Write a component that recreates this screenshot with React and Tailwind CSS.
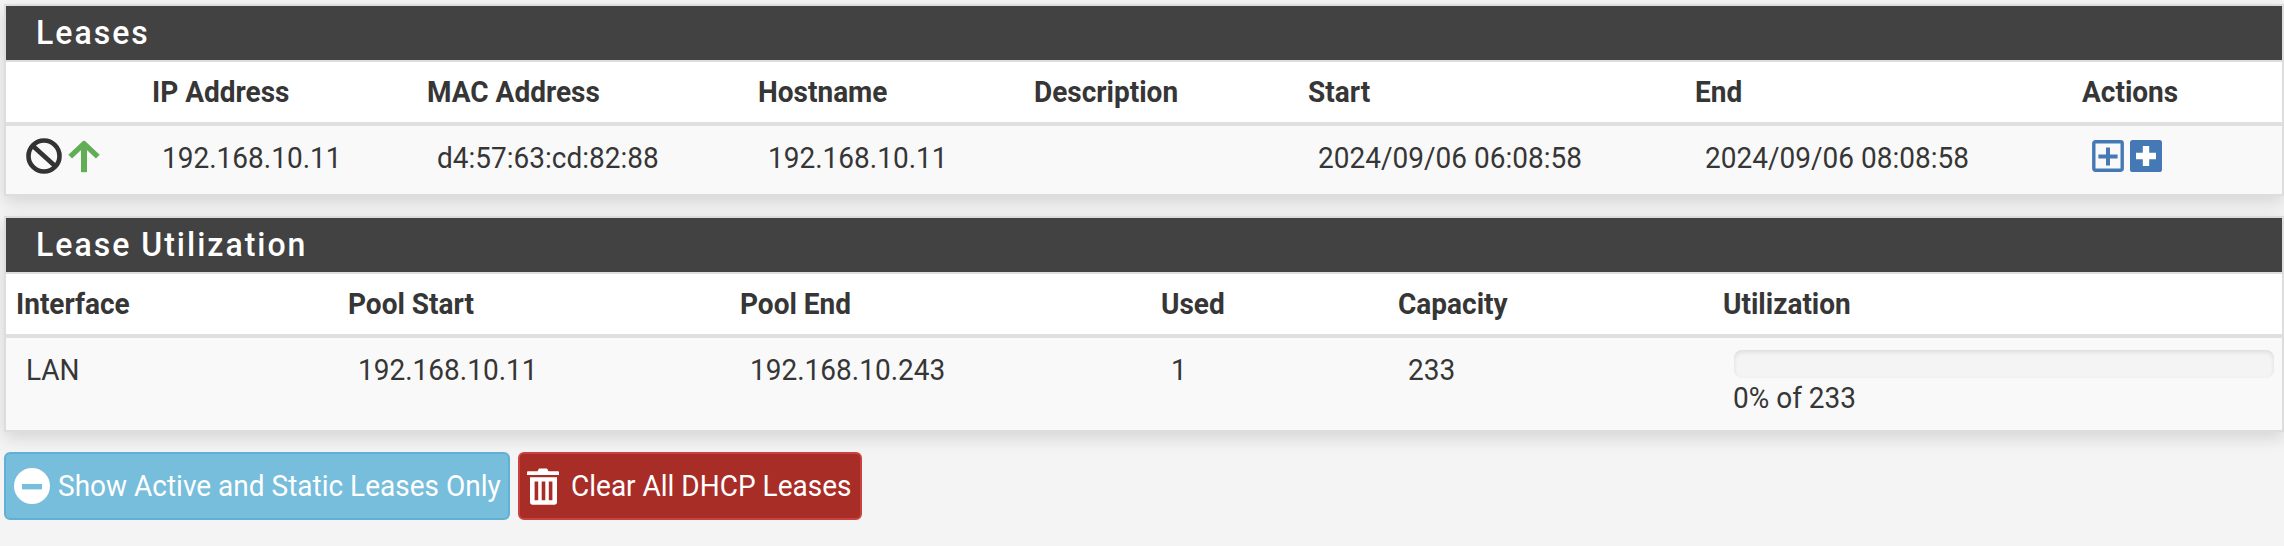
import React from "react";

const leaseCols = "grid grid-cols-[136px_275px_331px_276px_274px_387px_387px_210px]";
const poolCols = "grid grid-cols-[332px_392px_421px_237px_325px_569px]";

function Text({ children }) {
  return <span className="inline-block origin-[50%_73%] scale-y-[1.06] whitespace-nowrap">{children}</span>;
}

function Panel({ title, children }) {
  return (
    <section className="border-2 border-[#dddddd] bg-white shadow-[0_6px_16px_rgba(0,0,0,0.13)]">
      <h2 className="flex h-[54px] items-center bg-[#424242] pl-[30px] text-[32px] leading-[54px] font-medium tracking-[2px] text-white">
        <span className="inline-block origin-[50%_70%] scale-y-[1.04]">{title}</span>
      </h2>
      <div className="border-t-2 border-[#dddddd]">{children}</div>
    </section>
  );
}

function HeadRow({ cols, labels }) {
  return (
    <div className={`${cols} h-16 border-b-4 border-[#dfdfdf] pt-[11px] font-bold`}>
      {labels.map((l, i) => (
        <div key={i} className="pl-[10px] leading-10"><Text>{l}</Text></div>
      ))}
    </div>
  );
}

function Cell({ children }) {
  return <div className="pt-0.5 pl-5 leading-10"><Text>{children}</Text></div>;
}

function BanIcon() {
  return (
    <svg className="size-9" viewBox="0 0 36 36" fill="none" stroke="#333" strokeWidth="4.6">
      <circle cx="18" cy="18" r="15.5" />
      <path d="M7.5 8.5 28.5 27.5" />
    </svg>
  );
}

function UpIcon() {
  return (
    <svg className="h-9 w-8" viewBox="0 0 32 36" fill="none" stroke="#62ae57">
      <path d="M2.200 18.600 16 5.600 29.800 18.600" strokeWidth="5.4" strokeLinejoin="round" />
      <path d="M16 6v28.200" strokeWidth="6" />
    </svg>
  );
}

function PlusOutlineIcon() {
  return (
    <svg className="size-8" viewBox="0 0 32 32" fill="none" stroke="#4579b5">
      <rect x="1.8" y="1.8" width="28.4" height="28.4" rx="1.6" strokeWidth="3.4" />
      <path d="M6.400 16.500h19.200M16 7.600v18" strokeWidth="4" />
    </svg>
  );
}

function PlusSolidIcon() {
  return (
    <svg className="size-8" viewBox="0 0 32 32">
      <rect width="32" height="32" rx="2.6" fill="#4579b5" />
      <path d="M6 16h20M16 6v20" stroke="#fff" strokeWidth="6.4" />
    </svg>
  );
}

function MinusCircleIcon() {
  return (
    <svg className="size-9" viewBox="0 0 36 36">
      <circle cx="18" cy="18" r="18" fill="#fff" />
      <rect x="8" y="16" width="20" height="5.4" fill="#77bddc" />
    </svg>
  );
}

function TrashIcon() {
  return (
    <svg className="h-[38px] w-8" viewBox="0 0 32 38" fill="#fff">
      <path d="M10.500 3.200 12 .6h8l1.500 2.600H31q1 0 1 1v2.900H0V4.200q0-1 1-1z" />
      <path fillRule="evenodd" d="M3 9.300h27V34q0 2.700-2.700 2.700H5.700Q3 36.700 3 34zM7.600 13.600v18.600h3.600V13.600zM14.700 13.600v18.600h3.600V13.600zM21.800 13.600v18.600h3.600V13.600z" />
    </svg>
  );
}

export default function App() {
  return (
    <div className="h-[546px] overflow-hidden bg-[#f4f4f4] pt-1 pl-1 font-['Roboto',sans-serif] text-[28px] text-[#363636]">
      <div className="flex flex-col gap-5">
        <Panel title="Leases">
          <HeadRow cols={leaseCols} labels={["", "IP Address", "MAC Address", "Hostname", "Description", "Start", "End", "Actions"]} />
          <div className={`${leaseCols} h-[68px] bg-[#f9f9f9] pt-[11px]`}>
            <div className="flex items-start gap-1.5 pt-px pl-5"><BanIcon /><UpIcon /></div>
            <Cell>192.168.10.11</Cell>
            <Cell>d4:57:63:cd:82:88</Cell>
            <Cell>192.168.10.11</Cell>
            <Cell />
            <Cell>2024/09/06 06:08:58</Cell>
            <Cell>2024/09/06 08:08:58</Cell>
            <div className="flex gap-1.5 pt-[3px] pl-5"><PlusOutlineIcon /><PlusSolidIcon /></div>
          </div>
        </Panel>

        <Panel title="Lease Utilization">
          <HeadRow cols={poolCols} labels={["Interface", "Pool Start", "Pool End", "Used", "Capacity", "Utilization"]} />
          <div className={`${poolCols} h-[92px] bg-[#f9f9f9] pt-[11px]`}>
            <Cell>LAN</Cell>
            <Cell>192.168.10.11</Cell>
            <Cell>192.168.10.243</Cell>
            <Cell>1</Cell>
            <Cell>233</Cell>
            <div className="pt-px pr-2 pl-[21px]">
              <div className="h-7 rounded-lg bg-[#f4f4f4] shadow-[inset_0_2px_4px_rgba(0,0,0,0.1)]" />
              <div className="-ml-px pt-px leading-10"><Text>0% of 233</Text></div>
            </div>
          </div>
        </Panel>
      </div>

      <div className="mt-5 flex gap-2 text-white">
        <button className="flex h-[68px] w-[506px] items-start rounded-md border-2 border-[#62b1d5] bg-[#77bddc] pt-3.5 pl-2">
          <MinusCircleIcon />
          <span className="-mt-px ml-2 leading-10"><Text>Show Active and Static Leases Only</Text></span>
        </button>
        <button className="flex h-[68px] w-[344px] items-start rounded-md border-2 border-[#c9423d] bg-[#a92d27] pt-3.5 pl-[7px]">
          <TrashIcon />
          <span className="-mt-px ml-3 leading-10"><Text>Clear All DHCP Leases</Text></span>
        </button>
      </div>
    </div>
  );
}
